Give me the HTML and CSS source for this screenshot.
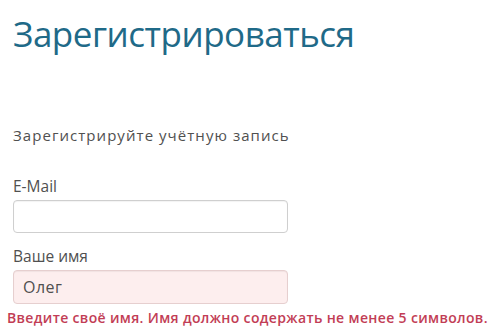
FILE: index.html
```html
<!DOCTYPE html>
<html lang="ru">
<head>
<meta charset="utf-8">
<link rel="stylesheet" href="styles.css">
</head>
<body>
<div class="page">
  <h1 class="title">Зарегистрироваться</h1>
  <p class="subtitle">Зарегистрируйте учётную запись</p>
  <div class="field">
    <label class="label">E-Mail</label>
    <div class="input"></div>
  </div>
  <div class="field">
    <label class="label">Ваше имя</label>
    <div class="input input-error">Олег</div>
  </div>
  <p class="error">Введите своё имя. Имя должно содержать не менее 5 символов.</p>
</div>
</body>
</html>
```
FILE: styles.css
```css
html, body {
  margin: 0;
  padding: 0;
  background: #ffffff;
}
.page {
  width: 500px;
  height: 334px;
  overflow: hidden;
  font-family: "Open Sans", "Noto Sans", sans-serif;
  color: #505050;
  padding: 0 0 0 13px;
  box-sizing: border-box;
}
.title {
  margin: 10px 0 0 0;
  font-weight: 400;
  font-size: 35px;
  line-height: 48px;
  color: #1f6a88;
  letter-spacing: -0.5px;
}
.subtitle {
  margin: 66px 0 0 0;
  font-size: 15px;
  line-height: 22px;
  letter-spacing: 1.05px;
}
.field {
  display: flex;
  flex-direction: column;
}
.label {
  font-size: 15.5px;
  line-height: 22px;
  margin-top: 29px;
  margin-bottom: 3px;
}
.field + .field .label {
  margin-top: 12px;
}
.input {
  width: 275px;
  height: 33px;
  box-sizing: border-box;
  border: 1px solid #cfcfcf;
  border-radius: 4px;
  background: #ffffff;
  box-shadow: inset 0 1px 1px rgba(0,0,0,0.05);
  font-size: 16px;
  line-height: 31px;
  padding: 0 9px;
  color: #505050;
  letter-spacing: 0.5px;
}
.input-error {
  height: 34px;
  line-height: 32px;
  background: #fdeeee;
  border-color: #e6cfcf;
}
.error {
  margin: 5px 0 0 -6px;
  font-size: 14px;
  line-height: 18px;
  font-weight: 600;
  color: #c23d55;
  white-space: nowrap;
  letter-spacing: 0.35px;
}
```
